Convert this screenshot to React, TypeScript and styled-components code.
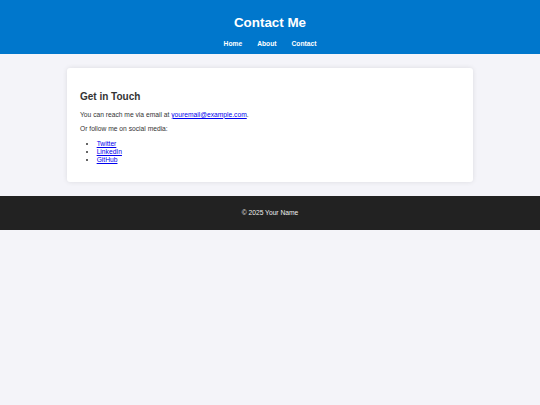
import React from 'react';
import styled, { createGlobalStyle } from 'styled-components';

const GlobalStyle = createGlobalStyle`
  body {
    margin: 0;
    font-family: "Liberation Sans", Arial, sans-serif;
    font-size: 6.7px;
    line-height: 8px;
    background: #f4f4f9;
    color: #333;
  }
`;

const Header = styled.header`
  background: #0077cc;
  color: #fff;
  text-align: center;
  padding: 6.67px 0;
`;

const Title = styled.h1`
  font-size: 13.4px;
  line-height: 15.4px;
  margin: 8px 0 9.6px;
`;

const Nav = styled.nav`
  line-height: 8px;
`;

const NavLink = styled.a`
  color: #fff;
  font-weight: bold;
  text-decoration: none;
  margin: 0 7.5px;
`;

const Card = styled.section`
  box-sizing: border-box;
  max-width: 406.7px;
  margin: 13.33px auto;
  padding: 13.33px;
  background: #fff;
  border-radius: 3px;
  box-shadow: 0 0 5px rgba(0, 0, 0, 0.1);
`;

const Heading = styled.h2`
  font-size: 10px;
  line-height: 11.5px;
  margin: 9.8px 0 8.5px;
`;

const Text = styled.p`
  margin: 6.67px 0;
`;

const Link = styled.a`
  color: #0000ee;
`;

const List = styled.ul`
  margin: 6.67px 0 5px;
  padding-left: 16.67px;
`;

const Footer = styled.footer`
  background: #222;
  color: #eee;
  text-align: center;
  padding: 6.67px 0;
`;

const socials = ['Twitter', 'LinkedIn', 'GitHub'];

const App: React.FC = () => {
  return (
    <>
      <GlobalStyle />
      <Header>
        <Title>Contact Me</Title>
        <Nav>
          <NavLink href="#">Home</NavLink>
          <NavLink href="#">About</NavLink>
          <NavLink href="#">Contact</NavLink>
        </Nav>
      </Header>
      <Card>
        <Heading>Get in Touch</Heading>
        <Text>
          You can reach me via email at <Link href="#">youremail@example.com</Link>.
        </Text>
        <Text>Or follow me on social media:</Text>
        <List>
          {socials.map((s) => (
            <li key={s}>
              <Link href="#">{s}</Link>
            </li>
          ))}
        </List>
      </Card>
      <Footer>
        <Text>© 2025 Your Name</Text>
      </Footer>
    </>
  );
};

export default App;
